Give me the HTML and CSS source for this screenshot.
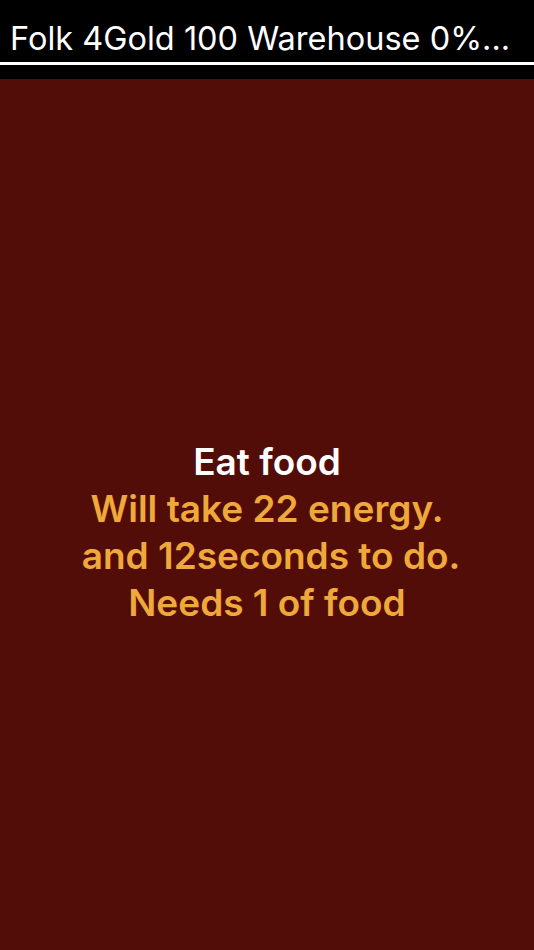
FILE: index.html
```html
<!DOCTYPE html>
<html lang="en">
<head>
    <meta charset="UTF-8">
    <meta name="viewport" content="width=device-width, initial-scale=1.0">
    <title>Folk</title>
    <link rel="stylesheet" href="styles.css">
</head>
<body>
    <div class="app">
        <div class="top">
            <div class="stats">Folk 4Gold 100 Warehouse 0%...</div>
            <div class="rule"></div>
        </div>
        <div class="task">
            <div class="title">Eat food</div>
            <div class="info">Will take 22 energy.<br><span class="pad"></span>and 12seconds to do.<br>Needs 1 of food</div>
        </div>
    </div>
</body>
</html>
```
FILE: styles.css
```css
*{
    margin: 0;
    padding: 0;
}
body{
    background-color: #000;
    font-family: Inter, "Noto Sans", sans-serif;
}
.app{
    width: 534px;
    height: 950px;
    display: flex;
    flex-direction: column;
}
.top{
    height: 79px;
    background-color: #000;
    padding-top: 19px;
    box-sizing: border-box;
}
.stats{
    color: #fff;
    font-size: 32.5px;
    line-height: 40px;
    padding: 0 10px;
    white-space: nowrap;
    overflow: hidden;
}
.rule{
    height: 3px;
    margin-top: 3px;
    background-color: #fff;
}
.task{
    flex: 1;
    background-color: #530d09;
    display: flex;
    flex-direction: column;
    align-items: center;
    justify-content: center;
    padding-top: 34px;
    text-align: center;
    font-size: 37px;
    font-weight: 600;
    line-height: 47px;
}
.title{
    color: #fff;
}
.info{
    color: #efa83a;
}
.pad{
    display: inline-block;
    width: 8px;
}
```
